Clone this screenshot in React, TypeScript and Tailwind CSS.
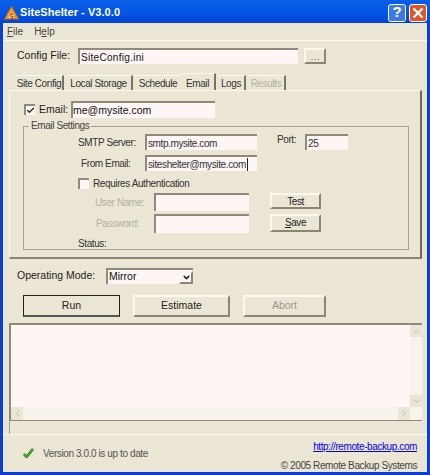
import { Check, ChevronDown, ChevronLeft, ChevronRight, ChevronUp } from 'lucide-react'

const sunken = 'border-t-2 border-l-2 border-t-[#8f8b7a] border-l-[#8f8b7a] bg-[#fdf6f4]'
const raised =
  'flex items-center justify-center border-2 border-t-[#fbf8f0] border-l-[#fbf8f0] border-r-[#8a8674] border-b-[#8a8674] text-[#222]'
const tight = 'text-[10px] tracking-[-0.4px] whitespace-nowrap'

function Tab({ label, active, dim, noSep, width }: { label: string; active?: boolean; dim?: boolean; noSep?: boolean; width: string }) {
  return (
    <div
      className={`${width} flex items-center justify-center border-t border-t-[#fbf8f0] ${tight} ${active ? 'h-[17px] pt-[2px]' : 'h-[15px]'} ${
        noSep ? '' : 'border-r-2 border-r-[#77735f]'
      } ${dim ? 'text-[#b3b0a0]' : 'text-[#333]'}`}
    >
      {label}
    </div>
  )
}

function Logo() {
  return (
    <svg width="15" height="14" viewBox="0 0 15 14" className="shrink-0">
      <path d="M7.5 0.5 L14.5 13 L0.5 13 Z" fill="#f59a23" stroke="#c9651a" />
      <path d="M5 13 L5 8 L10 8 L10 13 Z" fill="#ffe9b0" />
      <text x="7.5" y="12.5" fontSize="7" fontWeight="700" textAnchor="middle" fill="#8a3b00">
        S
      </text>
    </svg>
  )
}

export default function App() {
  return (
    <div className="flex h-[475px] w-[430px] flex-col overflow-hidden bg-[#0a3fd0] font-['Liberation_Sans',sans-serif] text-[11px] text-[#333]">
      {/* title bar */}
      <div className="flex h-[23px] shrink-0 items-center bg-gradient-to-b from-[#0a5fe8] via-[#0557e6] to-[#0346d2] pt-[2px] pr-[3px] pl-[4px]">
        <Logo />
        <span className="ml-[1px] text-[11px] font-bold tracking-[0.05px] text-white">SiteShelter - V3.0.0</span>
        <div className="ml-auto flex gap-[3px]">
          <div className="flex h-[18px] w-[18px] items-center justify-center rounded-[3px] border border-white bg-[#3c78e6] text-[15px] font-bold text-white">
            ?
          </div>
          <div className="flex h-[18px] w-[18px] items-center justify-center rounded-[3px] border border-white bg-[#e2542c]">
            <svg width="12" height="12" viewBox="0 0 12 12">
              <path d="M1.5 1.5 L10.5 10.5 M10.5 1.5 L1.5 10.5" stroke="#fff" strokeWidth="2.4" />
            </svg>
          </div>
        </div>
      </div>

      <div className="mx-[3px] mb-[3px] flex min-h-0 flex-1 flex-col bg-[#ebe6d5] bg-[repeating-conic-gradient(#eee9d9_0_25%,#e8e3d1_0_50%)] bg-[length:2px_2px]">
        {/* menu */}
        <div className="flex h-[18px] shrink-0 items-center gap-[11px] border-b border-b-[#fbf8f0] pl-[4px] text-[10px] text-[#444]">
          <span>
            <u>F</u>ile
          </span>
          <span>
            H<u>e</u>lp
          </span>
        </div>

        {/* config file */}
        <div className="mt-[7px] flex h-[16px] shrink-0 items-center">
          <span className="ml-[14px] w-[61px] text-[10.5px] text-[#222]">Config File:</span>
          <div className={`${sunken} flex h-[16px] w-[220px] items-center pl-[1px] text-[10px] tracking-[0.3px] text-[#111]`}>
            SiteConfig.ini
          </div>
          <div className={`${raised} ml-[6px] h-[16px] w-[22px] text-[#777]`}>...</div>
        </div>

        {/* tabs */}
        <div className="mt-[9px] flex h-[17px] shrink-0 items-end pl-[13px]">
          <Tab label="Site Config" width="w-[48px]" />
          <Tab label="Local Storage" width="w-[67px] ml-[2px]" />
          <Tab label="Schedule" noSep width="w-[46px] ml-[2px]" />
          <Tab label="Email" active width="w-[35px]" />
          <Tab label="Logs" width="w-[28px] ml-[2px]" />
          <Tab label="Results" dim width="w-[38px] ml-[2px]" />
        </div>

        {/* tab panel */}
        <div className="ml-[6px] flex h-[169px] w-[413px] shrink-0 flex-col border-t border-r-2 border-b-2 border-l border-t-[#fbf8f0] border-r-[#6f6b58] border-b-[#8a8674] border-l-[#fbf8f0]">
          <div className="mt-[10px] flex h-[17px] items-center">
            <div className="ml-[14px] flex h-[11px] w-[11px] items-center justify-center border-t-2 border-l-2 border-t-[#8f8b7a] border-l-[#8f8b7a] bg-[#fdf6f4]">
              <Check size={9} strokeWidth={3.5} className="text-[#222]" />
            </div>
            <span className="ml-[4px] w-[32px] text-[10.5px] text-[#222]">Email:</span>
            <div className={`${sunken} flex h-[17px] w-[144px] items-center text-[10.5px] text-[#111]`}>
              me@mysite.com
            </div>
          </div>

          {/* group box */}
          <div className="relative mt-[8px] ml-[13px] h-[124px] w-[386px] border border-[#a5a18e]">
            <span className={`absolute top-[-7px] left-[5px] bg-[#ebe6d5] px-[2px] leading-[12px] text-[#444] ${tight}`}>
              Email Settings
            </span>
            <div className="mt-[7px] flex h-[16px] items-center">
              <span className={`ml-[54px] w-[67px] ${tight}`}>SMTP Server:</span>
              <div className={`${sunken} flex h-[16px] w-[112px] items-center pl-[1px] ${tight}`}>smtp.mysite.com</div>
              <span className={`ml-[20px] w-[28px] -translate-y-[3px] ${tight}`}>Port:</span>
              <div className={`${sunken} flex h-[16px] w-[43px] items-center pl-[1px] ${tight}`}>25</div>
            </div>
            <div className="mt-[5px] flex h-[16px] items-center">
              <span className={`ml-[57px] w-[64px] ${tight}`}>From Email:</span>
              <div className={`${sunken} flex h-[16px] w-[112px] items-center pl-[1px] text-[10px] tracking-[-0.38px] whitespace-nowrap`}>
                siteshelter@mysite.com
                <span className="ml-[1px] h-[13px] w-px bg-[#222]" />
              </div>
            </div>
            <div className="mt-[7px] flex h-[11px] items-center">
              <div className="ml-[54px] h-[11px] w-[11px] border-t-2 border-l-2 border-t-[#8f8b7a] border-l-[#8f8b7a] bg-[#fdf6f4]" />
              <span className={`ml-[4px] ${tight}`}>Requires Authentication</span>
            </div>
            <div className="mt-[4px] flex h-[18px] items-center">
              <span className={`ml-[71px] w-[59px] text-[#b3b0a0] ${tight}`}>User Name:</span>
              <div className={`${sunken} h-[18px] w-[95px]`} />
              <div className={`${raised} ml-[21px] h-[16px] w-[51px] -translate-y-px ${tight}`}>Test</div>
            </div>
            <div className="mt-[3px] flex h-[19px] items-center">
              <span className={`ml-[72px] w-[58px] text-[#b3b0a0] ${tight}`}>Password:</span>
              <div className={`${sunken} h-[19px] w-[95px]`} />
              <div className={`${raised} ml-[21px] h-[18px] w-[51px] -translate-y-px ${tight}`}>
                <span>
                  <u>S</u>ave
                </span>
              </div>
            </div>
            <div className="mt-[3px] flex h-[14px] items-center">
              <span className={`ml-[54px] ${tight}`}>Status:</span>
            </div>
          </div>
        </div>

        {/* operating mode */}
        <div className="mt-[9px] flex h-[16px] shrink-0 items-center">
          <span className="ml-[14px] w-[89px] text-[10.5px] text-[#222]">Operating Mode:</span>
          <div className="flex h-[16px] w-[87px] items-center justify-between border-t-2 border-l-2 border-t-[#8f8b7a] border-l-[#8f8b7a] bg-[#fdf6f4] pl-[1px] text-[10.5px] text-[#111]">
            Mirror
            <div className={`${raised} h-[13px] w-[14px]`}>
              <ChevronDown size={9} strokeWidth={4} className="text-[#222]" />
            </div>
          </div>
        </div>

        {/* actions */}
        <div className="mt-[11px] flex h-[22px] shrink-0 items-center text-[10.5px]">
          <div className="ml-[20px] flex h-[22px] w-[97px] items-center justify-center border border-b-2 border-[#222] border-b-[#555] text-[#222]">
            Run
          </div>
          <div className={`${raised} ml-[13px] h-[22px] w-[97px]`}>Estimate</div>
          <div className={`${raised} ml-[13px] h-[22px] w-[83px] !text-[#99968a]`}>Abort</div>
        </div>

        {/* log box */}
        <div className="mt-[6px] ml-[6px] flex h-[98px] w-[413px] shrink-0 flex-col border-t-2 border-b border-l-2 border-t-[#8f8b7a] border-b-[#8f8b7a] border-l-[#8f8b7a] bg-[#fdf6f4]">
          <div className="flex min-h-0 flex-1">
            <div className="flex-1" />
            <div className="flex w-[12px] flex-col justify-between bg-[#f7f3ea]">
              <div className="flex h-[12px] items-center justify-center bg-[#e9e6d8]">
                <ChevronUp size={9} strokeWidth={2} className="text-[#aaa797]" />
              </div>
              <div className="flex h-[12px] items-center justify-center bg-[#e9e6d8]">
                <ChevronDown size={9} strokeWidth={2} className="text-[#aaa797]" />
              </div>
            </div>
          </div>
          <div className="flex h-[13px] items-center justify-between bg-[#f7f3ea] pr-[12px]">
            <div className="flex h-[13px] w-[12px] items-center justify-center bg-[#e9e6d8]">
              <ChevronLeft size={9} strokeWidth={2} className="text-[#aaa797]" />
            </div>
            <div className="flex h-[13px] w-[12px] items-center justify-center bg-[#e9e6d8]">
              <ChevronRight size={9} strokeWidth={2} className="text-[#aaa797]" />
            </div>
          </div>
        </div>
        <div className="ml-[6px] h-[13px] shrink-0 border-l border-l-[#a5a18e]" />

        {/* footer */}
        <div className="flex min-h-0 flex-1 justify-between border-t border-t-[#fbf8f0] pr-[10px]">
          <div className="mt-[11px] ml-[20px] flex h-[14px] items-center">
            <svg width="11" height="10" viewBox="0 0 11 10" className="shrink-0">
              <path d="M1 6 L3.5 9 L10 1" fill="none" stroke="#1d5e12" strokeWidth="2.6" />
              <path d="M1 6 L3.5 9 L10 1" fill="none" stroke="#46c12c" strokeWidth="1.2" />
            </svg>
            <span className={`ml-[9px] text-[#555] ${tight}`}>Version 3.0.0 is up to date</span>
          </div>
          <div className="mt-[4px] flex flex-col items-end">
            <span className={`text-[#0000f0] underline ${tight}`}>http://remote-backup.com</span>
            <span className={`mt-[4px] text-[#444] ${tight}`}>© 2005 Remote Backup Systems</span>
          </div>
        </div>
      </div>
    </div>
  )
}
